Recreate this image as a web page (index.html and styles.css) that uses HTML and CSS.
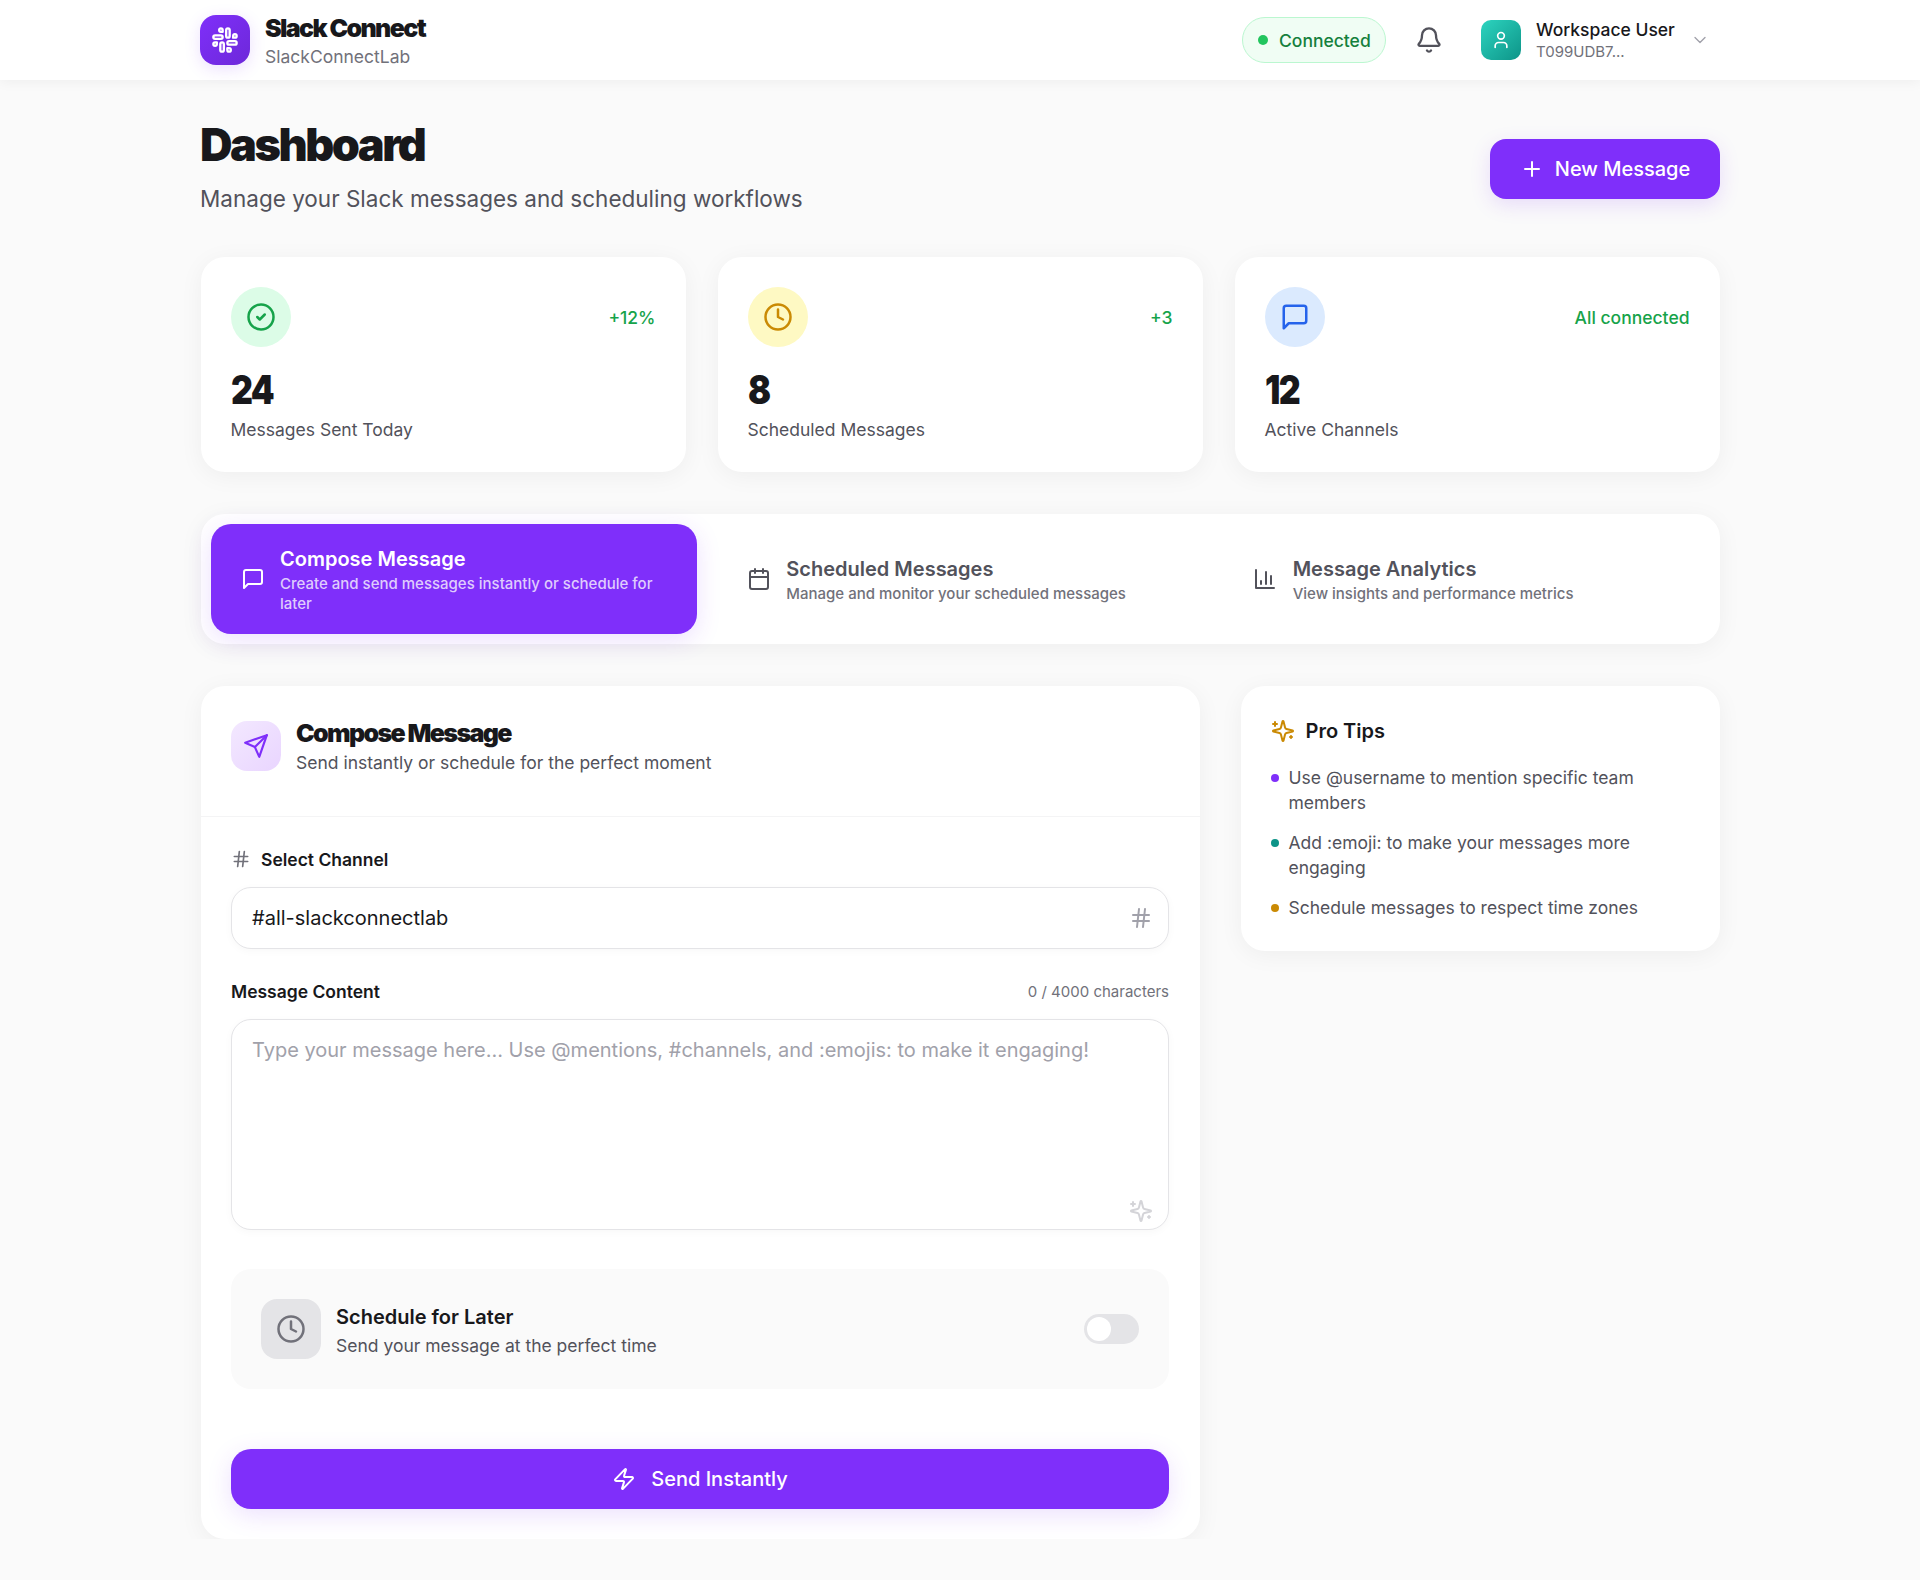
FILE: index.html
```html
<!DOCTYPE html>
<html lang="en">
<head>
  <meta charset="UTF-8">
  <meta name="viewport" content="width=device-width, initial-scale=1.0">
  <title>Slack Connect Dashboard</title>
  <link rel="stylesheet" href="styles.css">
</head>
<body>
  <header class="topbar">
    <div class="topbar-inner">
      <div class="brand">
        <div class="brand-logo">
          <svg class="icon" width="28" height="28" viewBox="0 0 24 24"><rect x="13" y="2" width="3" height="8" rx="1.5"/><path d="M19 8.5V10h1.5A1.5 1.5 0 1 0 19 8.5"/><rect x="8" y="14" width="3" height="8" rx="1.5"/><path d="M5 15.5V14H3.5A1.5 1.5 0 1 0 5 15.5"/><rect x="14" y="13" width="8" height="3" rx="1.5"/><path d="M15.5 19H14v1.5a1.5 1.5 0 1 0 1.5-1.5"/><rect x="2" y="8" width="8" height="3" rx="1.5"/><path d="M8.5 5H10V3.5A1.5 1.5 0 1 0 8.5 5"/></svg>
        </div>
        <div class="brand-text">
          <div class="brand-name">Slack Connect</div>
          <div class="brand-sub">SlackConnectLab</div>
        </div>
      </div>
      <div class="topbar-right">
        <div class="status-pill"><span class="status-dot"></span>Connected</div>
        <svg class="icon bell" width="28" height="28" viewBox="0 0 24 24"><path d="M10.268 21a2 2 0 0 0 3.464 0"/><path d="M3.262 15.326A1 1 0 0 0 4 17h16a1 1 0 0 0 .74-1.673C19.41 13.956 18 12.499 18 8A6 6 0 0 0 6 8c0 4.499-1.411 5.956-2.738 7.326"/></svg>
        <div class="user">
          <div class="avatar">
            <svg class="icon" width="20" height="20" viewBox="0 0 24 24"><path d="M19 21v-2a4 4 0 0 0-4-4H9a4 4 0 0 0-4 4v2"/><circle cx="12" cy="7" r="4"/></svg>
          </div>
          <div class="user-text">
            <div class="user-name">Workspace User</div>
            <div class="user-id">T099UDB7...</div>
          </div>
          <svg class="icon chevron" width="20" height="20" viewBox="0 0 24 24"><path d="m6 9 6 6 6-6"/></svg>
        </div>
      </div>
    </div>
  </header>

  <main class="page">
    <section class="page-head">
      <div>
        <h1>Dashboard</h1>
        <p class="page-sub">Manage your Slack messages and scheduling workflows</p>
      </div>
      <button class="new-btn">
        <svg class="icon" width="24" height="24" viewBox="0 0 24 24"><path d="M5 12h14"/><path d="M12 5v14"/></svg>
        New Message
      </button>
    </section>

    <section class="stats">
      <div class="card stat">
        <div class="stat-top">
          <div class="stat-icon green">
            <svg class="icon" width="30" height="30" viewBox="0 0 24 24"><circle cx="12" cy="12" r="10"/><path d="m9 12 2 2 4-4"/></svg>
          </div>
          <span class="stat-note">+12%</span>
        </div>
        <div class="stat-num">24</div>
        <div class="stat-label">Messages Sent Today</div>
      </div>
      <div class="card stat">
        <div class="stat-top">
          <div class="stat-icon yellow">
            <svg class="icon" width="30" height="30" viewBox="0 0 24 24"><circle cx="12" cy="12" r="10"/><path d="M12 6v6l4 2"/></svg>
          </div>
          <span class="stat-note">+3</span>
        </div>
        <div class="stat-num">8</div>
        <div class="stat-label">Scheduled Messages</div>
      </div>
      <div class="card stat">
        <div class="stat-top">
          <div class="stat-icon blue">
            <svg class="icon" width="30" height="30" viewBox="0 0 24 24"><path d="M21 15a2 2 0 0 1-2 2H7l-4 4V5a2 2 0 0 1 2-2h14a2 2 0 0 1 2 2z"/></svg>
          </div>
          <span class="stat-note">All connected</span>
        </div>
        <div class="stat-num">12</div>
        <div class="stat-label">Active Channels</div>
      </div>
    </section>

    <nav class="card tabs">
      <div class="tab active">
        <svg class="icon" width="24" height="24" viewBox="0 0 24 24"><path d="M21 15a2 2 0 0 1-2 2H7l-4 4V5a2 2 0 0 1 2-2h14a2 2 0 0 1 2 2z"/></svg>
        <div class="tab-text">
          <div class="tab-title">Compose Message</div>
          <div class="tab-desc">Create and send messages instantly or schedule for later</div>
        </div>
      </div>
      <div class="tab">
        <svg class="icon" width="24" height="24" viewBox="0 0 24 24"><path d="M8 2v4"/><path d="M16 2v4"/><rect x="3" y="4" width="18" height="18" rx="2"/><path d="M3 10h18"/></svg>
        <div class="tab-text">
          <div class="tab-title">Scheduled Messages</div>
          <div class="tab-desc">Manage and monitor your scheduled messages</div>
        </div>
      </div>
      <div class="tab">
        <svg class="icon" width="24" height="24" viewBox="0 0 24 24"><path d="M3 3v18h18"/><path d="M18 17V9"/><path d="M13 17V5"/><path d="M8 17v-3"/></svg>
        <div class="tab-text">
          <div class="tab-title">Message Analytics</div>
          <div class="tab-desc">View insights and performance metrics</div>
        </div>
      </div>
    </nav>

    <div class="columns">
      <section class="card compose">
        <div class="compose-head">
          <div class="compose-icon">
            <svg class="icon" width="26" height="26" viewBox="0 0 24 24"><path d="m22 2-7 20-4-9-9-4Z"/><path d="M22 2 11 13"/></svg>
          </div>
          <div>
            <h2>Compose Message</h2>
            <p class="compose-sub">Send instantly or schedule for the perfect moment</p>
          </div>
        </div>
        <div class="compose-body">
          <div class="label-row">
            <label class="field-label">
              <svg class="icon" width="20" height="20" viewBox="0 0 24 24"><path d="M4 9h16"/><path d="M4 15h16"/><path d="M10 3 8 21"/><path d="M16 3l-2 18"/></svg>
              Select Channel
            </label>
          </div>
          <div class="select">
            <span>#all-slackconnectlab</span>
            <svg class="icon" width="24" height="24" viewBox="0 0 24 24"><path d="M4 9h16"/><path d="M4 15h16"/><path d="M10 3 8 21"/><path d="M16 3l-2 18"/></svg>
          </div>
          <div class="label-row second">
            <label class="field-label">Message Content</label>
            <span class="char-count">0 / 4000 characters</span>
          </div>
          <div class="textarea">
            <span class="placeholder">Type your message here... Use @mentions, #channels, and :emojis: to make it engaging!</span>
            <svg class="icon spark textarea-spark" width="24" height="24" viewBox="0 0 24 24"><path d="M9.937 15.5A2 2 0 0 0 8.5 14.063l-6.135-1.582a.5.5 0 0 1 0-.962L8.5 9.936A2 2 0 0 0 9.937 8.5l1.582-6.135a.5.5 0 0 1 .963 0L14.063 8.5A2 2 0 0 0 15.5 9.937l6.135 1.581a.5.5 0 0 1 0 .964L15.5 14.063a2 2 0 0 0-1.437 1.437l-1.582 6.135a.5.5 0 0 1-.963 0z"/><path d="M20 3v4"/><path d="M22 5h-4"/><path d="M4 17v2"/><path d="M5 18H3"/></svg>
          </div>
          <div class="schedule">
            <div class="schedule-icon">
              <svg class="icon" width="30" height="30" viewBox="0 0 24 24"><circle cx="12" cy="12" r="10"/><path d="M12 6v6l4 2"/></svg>
            </div>
            <div class="schedule-text">
              <div class="schedule-title">Schedule for Later</div>
              <div class="schedule-sub">Send your message at the perfect time</div>
            </div>
            <div class="toggle"><span class="knob"></span></div>
          </div>
          <button class="send-btn">
            <svg class="icon" width="24" height="24" viewBox="0 0 24 24"><path d="M4 14a1 1 0 0 1-.78-1.63l9.9-10.2a.5.5 0 0 1 .86.46l-1.92 6.02A1 1 0 0 0 13 10h7a1 1 0 0 1 .78 1.63l-9.9 10.2a.5.5 0 0 1-.86-.46l1.92-6.02A1 1 0 0 0 11 14z"/></svg>
            Send Instantly
          </button>
        </div>
      </section>

      <aside class="card tips">
        <h3>
          <svg class="icon spark" width="24" height="24" viewBox="0 0 24 24"><path d="M9.937 15.5A2 2 0 0 0 8.5 14.063l-6.135-1.582a.5.5 0 0 1 0-.962L8.5 9.936A2 2 0 0 0 9.937 8.5l1.582-6.135a.5.5 0 0 1 .963 0L14.063 8.5A2 2 0 0 0 15.5 9.937l6.135 1.581a.5.5 0 0 1 0 .964L15.5 14.063a2 2 0 0 0-1.437 1.437l-1.582 6.135a.5.5 0 0 1-.963 0z"/><path d="M20 3v4"/><path d="M22 5h-4"/><path d="M4 17v2"/><path d="M5 18H3"/></svg>
          Pro Tips
        </h3>
        <ul class="tips-list">
          <li><span class="tip-dot purple"></span>Use @username to mention specific team members</li>
          <li><span class="tip-dot teal"></span>Add :emoji: to make your messages more engaging</li>
          <li><span class="tip-dot amber"></span>Schedule messages to respect time zones</li>
        </ul>
      </aside>
    </div>
  </main>
</body>
</html>
```

FILE: styles.css
```css
* {
  box-sizing: border-box;
}
body {
  margin: 0;
  font-family: Inter, "Liberation Sans", sans-serif;
  color: #18181b;
  background-color: #fafafa;
}
h1, h2, h3, p, ul {
  margin: 0;
  padding: 0;
}
.icon {
  fill: none;
  stroke: currentColor;
  stroke-width: 2;
  stroke-linecap: round;
  stroke-linejoin: round;
  flex-shrink: 0;
}
.spark {
  transform: scaleX(-1);
}

/* top bar */
.topbar {
  height: 80px;
  background: #fff;
  box-shadow: 0 2px 12px rgba(0, 0, 0, 0.05);
}
.topbar-inner {
  width: 1520px;
  height: 80px;
  margin: 0 auto;
  display: flex;
  align-items: center;
  justify-content: space-between;
}
.brand {
  display: flex;
  align-items: center;
  gap: 15px;
}
.brand-logo {
  width: 50px;
  height: 50px;
  border-radius: 16px;
  background: linear-gradient(135deg, #7f2ffa, #6d28d9);
  color: #fff;
  display: flex;
  align-items: center;
  justify-content: center;
  box-shadow: 0 4px 16px rgba(127, 47, 250, 0.15);
}
.brand-text {
  padding-top: 2px;
}
.brand-name {
  font-size: 25px;
  line-height: 30px;
  font-weight: 900;
  letter-spacing: -0.065em;
}
.brand-sub {
  margin-top: 2px;
  font-size: 17.5px;
  line-height: 24px;
  color: #71717a;
}
.topbar-right {
  display: flex;
  align-items: center;
}
.status-pill {
  height: 46px;
  width: 144px;
  display: flex;
  align-items: center;
  gap: 11px;
  padding-left: 15px;
  border: 1px solid #bbf7d0;
  border-radius: 23px;
  background: #f0fdf4;
  color: #15803d;
  font-size: 17.5px;
  font-weight: 500;
}
.status-dot {
  width: 10px;
  height: 10px;
  border-radius: 50%;
  background: #22c55e;
}
.bell {
  margin-left: 29px;
  color: #52525b;
}
.user {
  margin-left: 38px;
  width: 239px;
  display: flex;
  align-items: center;
}
.avatar {
  width: 40px;
  height: 40px;
  border-radius: 10px;
  background: linear-gradient(135deg, #2dd4bf, #0d9488);
  color: #fff;
  display: flex;
  align-items: center;
  justify-content: center;
}
.user-text {
  margin-left: 15px;
  width: 154px;
}
.user-name {
  font-size: 17.5px;
  line-height: 21px;
  font-weight: 500;
}
.user-id {
  margin-top: 3px;
  font-size: 15px;
  line-height: 18px;
  color: #71717a;
}
.chevron {
  color: #a1a1aa;
  stroke-width: 1.6;
}

/* page */
.page {
  width: 1520px;
  margin: 0 auto;
}
.page-head {
  display: flex;
  justify-content: space-between;
  align-items: center;
  padding-top: 38px;
}
h1 {
  font-size: 45px;
  line-height: 54px;
  font-weight: 900;
  letter-spacing: -0.055em;
}
.page-sub {
  margin-top: 11px;
  font-size: 22.5px;
  line-height: 32px;
  color: #52525b;
}
.new-btn {
  width: 230px;
  height: 60px;
  margin-top: 5px;
  border: none;
  border-radius: 16px;
  background: #7f2ffa;
  color: #fff;
  font-family: inherit;
  font-size: 20px;
  font-weight: 500;
  display: flex;
  align-items: center;
  justify-content: center;
  gap: 11px;
  box-shadow: 0 6px 20px rgba(127, 47, 250, 0.15);
}
.card {
  background: #fff;
  border-radius: 24px;
  box-shadow: 0 4px 24px rgba(0, 0, 0, 0.05);
}

/* stats */
.stats {
  margin: 42px 0.5px 0;
  display: grid;
  grid-template-columns: repeat(3, 1fr);
  gap: 32px;
}
.stat {
  height: 215px;
  padding: 30px;
}
.stat-top {
  display: flex;
  align-items: center;
  justify-content: space-between;
}
.stat-icon {
  width: 60px;
  height: 60px;
  border-radius: 50%;
  display: flex;
  align-items: center;
  justify-content: center;
}
.stat-icon.green {
  background: #dcfce7;
  color: #16a34a;
}
.stat-icon.yellow {
  background: #fef9c3;
  color: #ca8a04;
}
.stat-icon.blue {
  background: #dbeafe;
  color: #2563eb;
}
.stat-note {
  font-size: 17.5px;
  font-weight: 500;
  color: #16a34a;
}
.stat-num {
  margin-top: 19px;
  font-size: 40px;
  line-height: 48px;
  font-weight: 900;
  letter-spacing: -0.05em;
  transform: scaleX(0.85);
  transform-origin: left center;
}
.stat-label {
  margin-top: 3px;
  font-size: 17.5px;
  line-height: 26px;
  color: #52525b;
}

/* tabs */
.tabs {
  margin: 42px 0.5px 0;
  height: 130px;
  padding: 10px;
  display: grid;
  grid-template-columns: repeat(3, 1fr);
  gap: 20px;
}
.tab {
  display: flex;
  align-items: center;
  gap: 15.5px;
  padding: 0 30px;
  border-radius: 20px;
  color: #52525b;
}
.tab.active {
  background: #7f2ffa;
  color: #fff;
  box-shadow: 0 6px 24px rgba(127, 47, 250, 0.15);
}
.tab-text {
  padding-top: 2px;
}
.tab-title {
  font-size: 20px;
  line-height: 26px;
  font-weight: 600;
}
.tab-desc {
  margin-top: 2px;
  font-size: 15px;
  line-height: 20px;
  font-weight: 500;
  color: #71717a;
}
.tab.active .tab-desc {
  color: #dfccfd;
}

/* columns */
.columns {
  margin: 42px 0.5px 0;
  display: grid;
  grid-template-columns: 999px 479px;
  justify-content: space-between;
  align-items: start;
}
.compose {
  height: 853px;
}
.compose-head {
  height: 131px;
  padding: 35px 30.5px 0;
  display: flex;
  align-items: flex-start;
  gap: 15px;
  border-bottom: 1px solid #f4f4f5;
}
.compose-icon {
  width: 50px;
  height: 50px;
  border-radius: 16px;
  background: linear-gradient(135deg, #f3e8ff, #e9d5ff);
  color: #7f2ffa;
  display: flex;
  align-items: center;
  justify-content: center;
}
h2 {
  margin-top: -4px;
  font-size: 25px;
  line-height: 32px;
  font-weight: 900;
  letter-spacing: -0.065em;
}
.compose-sub {
  margin-top: 2px;
  font-size: 17.5px;
  line-height: 24px;
  color: #52525b;
}
.compose-body {
  padding: 31px 30.5px;
}
.label-row {
  height: 22px;
  display: flex;
  align-items: center;
  justify-content: space-between;
}
.label-row.second {
  margin-top: 31px;
}
.field-label {
  display: flex;
  align-items: center;
  gap: 10px;
  font-size: 17.5px;
  font-weight: 600;
}
.field-label .icon {
  color: #71717a;
}
.char-count {
  font-size: 15px;
  color: #71717a;
}
.select {
  margin-top: 17px;
  height: 62px;
  padding: 0 15px 0 20px;
  display: flex;
  align-items: center;
  justify-content: space-between;
  border: 1px solid #e4e4e7;
  border-radius: 20px;
  background: #fff;
  font-size: 20px;
  box-shadow: 0 2px 8px rgba(0, 0, 0, 0.03);
}
.select .icon {
  color: #a1a1aa;
}
.textarea {
  position: relative;
  margin-top: 17px;
  height: 211px;
  padding: 18px 20px;
  border: 1px solid #e4e4e7;
  border-radius: 20px;
  background: #fff;
  font-size: 20px;
  line-height: 24px;
  box-shadow: 0 2px 8px rgba(0, 0, 0, 0.03);
}
.placeholder {
  color: #a1a1aa;
}
.textarea-spark {
  position: absolute;
  right: 15px;
  bottom: 6px;
  color: #d4d4d8;
}
.schedule {
  margin-top: 39px;
  height: 120px;
  padding: 0 30px;
  display: flex;
  align-items: center;
  border-radius: 20px;
  background: #fafafa;
}
.schedule-icon {
  width: 60px;
  height: 60px;
  border-radius: 16px;
  background: #e4e4e7;
  color: #71717a;
  display: flex;
  align-items: center;
  justify-content: center;
}
.schedule-text {
  margin-left: 15px;
  padding-top: 3px;
  flex: 1;
}
.schedule-title {
  font-size: 20px;
  line-height: 28px;
  font-weight: 600;
}
.schedule-sub {
  margin-top: 2px;
  font-size: 17.5px;
  line-height: 26px;
  color: #52525b;
}
.toggle {
  width: 55px;
  height: 30px;
  padding: 3px;
  border-radius: 15px;
  background: #e4e4e7;
}
.knob {
  display: block;
  width: 24px;
  height: 24px;
  border-radius: 50%;
  background: #fff;
}
.send-btn {
  margin-top: 60px;
  width: 100%;
  height: 60px;
  border: none;
  border-radius: 20px;
  background: #7f2ffa;
  color: #fff;
  font-family: inherit;
  font-size: 20px;
  font-weight: 500;
  display: flex;
  align-items: center;
  justify-content: center;
  gap: 15px;
  box-shadow: 0 6px 24px rgba(127, 47, 250, 0.15);
}

/* tips */
.tips {
  height: 265px;
  padding: 31px 30px;
}
h3 {
  display: flex;
  align-items: center;
  gap: 11px;
  font-size: 20px;
  line-height: 28px;
  font-weight: 600;
}
h3 .icon {
  color: #ca8a04;
}
.tips-list {
  margin-top: 20px;
  list-style: none;
}
.tips-list li {
  position: relative;
  padding-left: 18px;
  margin-bottom: 15px;
  font-size: 17.5px;
  line-height: 25px;
  color: #52525b;
}
.tip-dot {
  position: absolute;
  left: 0;
  top: 9px;
  width: 8px;
  height: 8px;
  border-radius: 50%;
}
.tip-dot.purple {
  background: #7f2ffa;
}
.tip-dot.teal {
  background: #0d9488;
}
.tip-dot.amber {
  background: #ca8a04;
}
```
